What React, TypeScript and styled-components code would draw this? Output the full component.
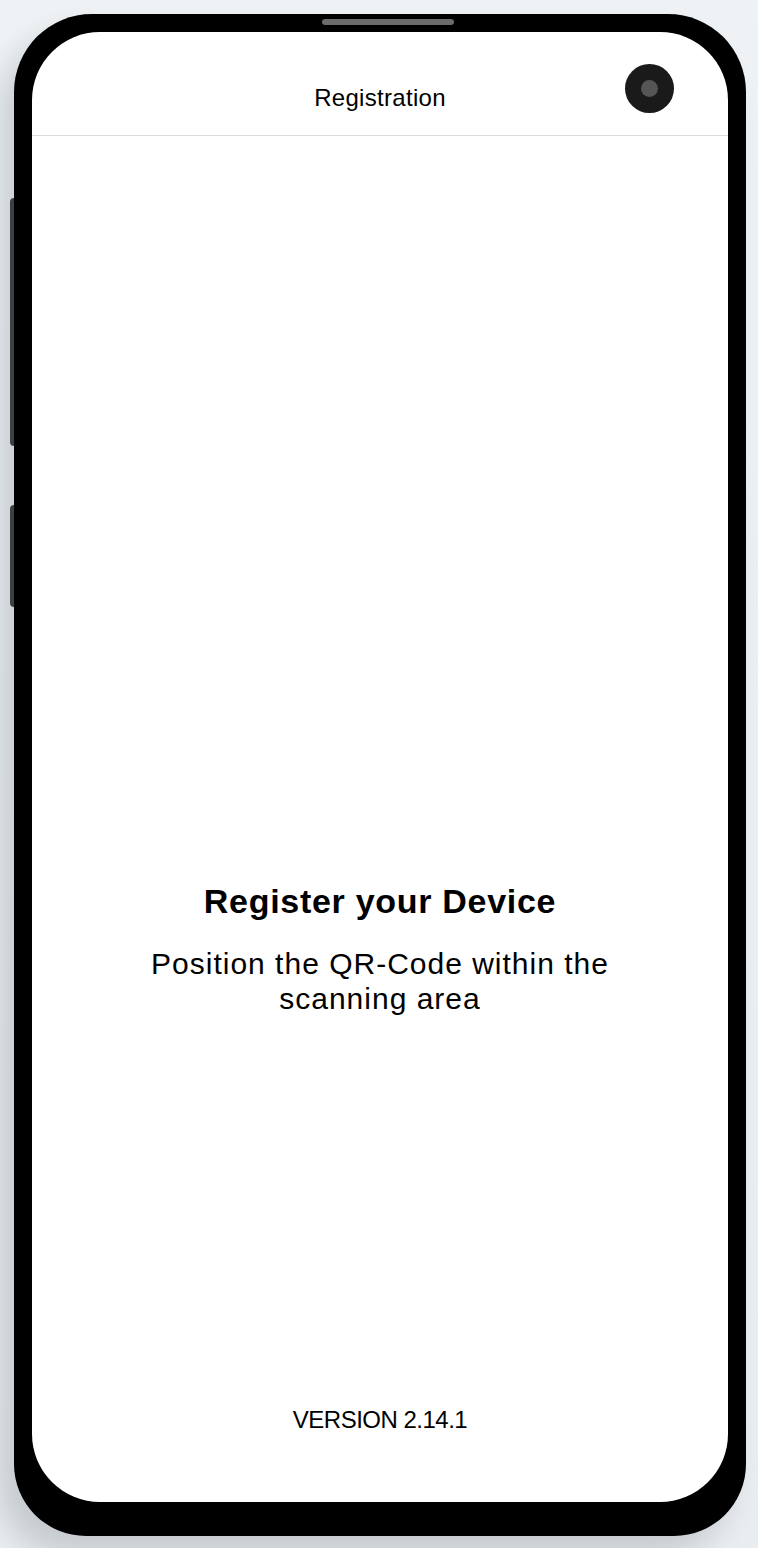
import React from "react";
import styled, { createGlobalStyle } from "styled-components";

const GlobalStyle = createGlobalStyle`
  html, body {
    margin: 0;
    padding: 0;
    background: #eef2f5;
  }
  body {
    font-family: "Liberation Sans", Arial, Helvetica, sans-serif;
    color: #000;
    -webkit-font-smoothing: antialiased;
  }
  * { box-sizing: border-box; }
`;

const Page = styled.div`
  width: 758px;
  height: 1548px;
  padding: 14px 12px 12px 14px;
  overflow: hidden;
  background: linear-gradient(180deg, #eef2f5 0%, #e9edf0 100%);
`;

const Phone = styled.div`
  position: relative;
  width: 732px;
  height: 1522px;
  padding: 18px 18px 34px;
  background: #000;
  border-radius: 78px 78px 72px 72px;
  box-shadow: -16px 20px 30px rgba(0, 15, 25, 0.15);
  display: flex;
`;

const Speaker = styled.div`
  position: absolute;
  top: 5px;
  left: 308px;
  width: 132px;
  height: 6px;
  border-radius: 3px;
  background: #6b6b6b;
`;

const SideButton = styled.div<{ $top: number; $height: number }>`
  position: absolute;
  left: -4px;
  top: ${(p) => p.$top}px;
  width: 4px;
  height: ${(p) => p.$height}px;
  border-radius: 4px 0 0 4px;
  background: #3b4042;
`;

const Screen = styled.div`
  position: relative;
  flex: 1;
  background: #fff;
  border-radius: 68px 68px 68px 68px;
  overflow: hidden;
  display: flex;
  flex-direction: column;
`;

const Header = styled.header`
  height: 104px;
  flex: none;
  display: flex;
  align-items: flex-end;
  justify-content: center;
  padding-bottom: 23px;
  border-bottom: 1px solid #dcdcdc;
`;

const HeaderTitle = styled.h1`
  margin: 0;
  font-size: 24px;
  line-height: 28px;
  font-weight: 400;
  letter-spacing: 0.3px;
`;

const Camera = styled.div`
  position: absolute;
  top: 32px;
  left: 593px;
  width: 49px;
  height: 49px;
  border-radius: 50%;
  background: #1a1a1a;
  display: flex;
  align-items: center;
  justify-content: center;
`;

const Lens = styled.div`
  width: 17px;
  height: 17px;
  border-radius: 50%;
  background: #555;
`;

const Viewfinder = styled.main`
  flex: 1;
`;

const Instructions = styled.section`
  display: flex;
  flex-direction: column;
  align-items: center;
  text-align: center;
  padding: 0 40px;
`;

const Title = styled.h2`
  margin: 0;
  font-size: 34px;
  line-height: 40px;
  font-weight: 700;
  letter-spacing: 0.7px;
`;

const Subtitle = styled.p`
  margin: 25px 0 0;
  font-size: 30px;
  line-height: 35px;
  font-weight: 400;
  letter-spacing: 1px;
`;

const Footer = styled.footer`
  flex: none;
  padding: 390px 0 68px;
  display: flex;
  justify-content: center;
`;

const Version = styled.span`
  font-size: 24px;
  line-height: 28px;
  letter-spacing: -0.5px;
`;

export default function App() {
  return (
    <>
      <GlobalStyle />
      <Page>
        <Phone>
          <Speaker />
          <SideButton $top={184} $height={248} />
          <SideButton $top={491} $height={102} />
          <Screen>
            <Header>
              <HeaderTitle>Registration</HeaderTitle>
            </Header>
            <Camera>
              <Lens />
            </Camera>
            <Viewfinder />
            <Instructions>
              <Title>Register your Device</Title>
              <Subtitle>
                Position the QR-Code within the
                <br />
                scanning area
              </Subtitle>
            </Instructions>
            <Footer>
              <Version>VERSION 2.14.1</Version>
            </Footer>
          </Screen>
        </Phone>
      </Page>
    </>
  );
}
